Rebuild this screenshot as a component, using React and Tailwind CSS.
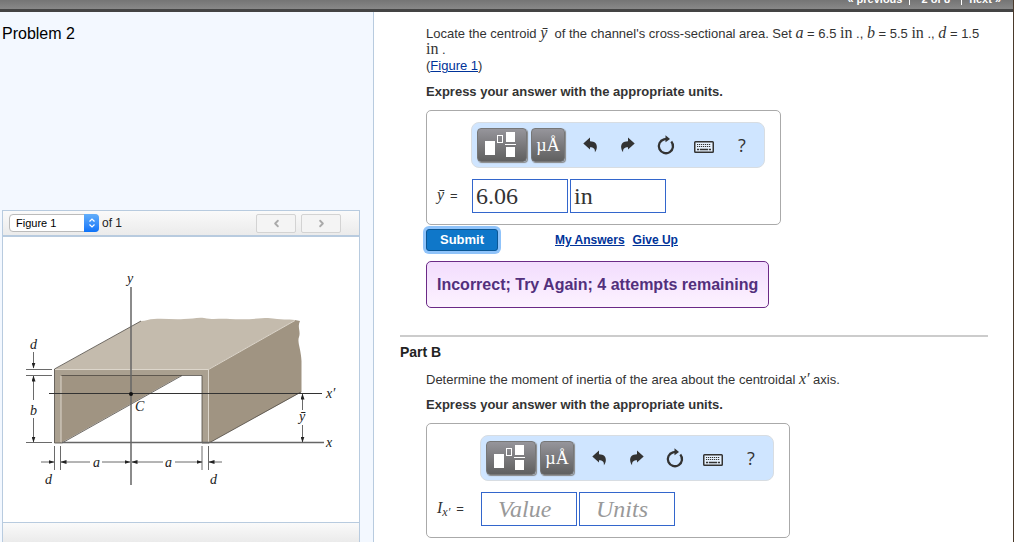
import { useState } from "react";
import { ChevronLeft, ChevronRight } from "lucide-react";

const serif = "font-['Liberation_Serif',serif]";

function MathText({ children, italic }) {
  return <span className={`${serif} text-[16px] leading-[0] ${italic ? "italic" : ""}`}>{children}</span>;
}

function ToolIcon({ name }) {
  if (name === "Undo") {
    return (
      <svg className="h-6 w-6" viewBox="0 0 24 24" fill="#333">
        <path d="M5.3 10.6 12 4.600v3.600c5 .1 7.300 2.600 6.800 6.600-.2 1.800-.9 3.200-1.900 4.400.3-3.600-1.300-5-4.900-5V16.600z" />
      </svg>
    );
  }
  if (name === "Redo") {
    return (
      <svg className="h-6 w-6" viewBox="0 0 24 24" fill="#333">
        <path d="M18.700 10.600 12 4.600v3.600c-5 .1-7.300 2.600-6.800 6.600.2 1.800.9 3.200 1.900 4.400-.3-3.600 1.300-5 4.900-5v2.400z" />
      </svg>
    );
  }
  if (name === "Reset") {
    return (
      <svg className="h-6 w-6" viewBox="0 0 24 24" fill="none">
        <path d="M17.300 8.500A7.100 7.100 0 1 1 10 6.300L13 5.800" stroke="#333" strokeWidth="2.300" />
        <path d="M11.500 2.200 16 6l-4.500 3.300z" fill="#333" />
      </svg>
    );
  }
  return (
    <svg className="h-6 w-6" viewBox="0 0 24 24" fill="none" stroke="#333">
      <rect x="2.750" y="8.750" width="18.500" height="10.500" rx="0.800" strokeWidth="1.500" fill="#e6f1fd" />
      <path d="M5 11.500h14M5 13.500h14" strokeWidth="1.200" strokeDasharray="1.200 0.800" />
      <path d="M5 16.500h2.200M8 16.500h8M16.800 16.500h2.200" strokeWidth="1.400" />
    </svg>
  );
}

function Toolbar() {
  const dark =
    "h-[34px] rounded-[4px] border border-[#777] bg-linear-to-b from-[#96959b] to-[#606060] shadow-[1px_1px_1px_#888]";
  return (
    <div className="flex h-[46px] w-[294px] items-center rounded-[8px] border border-[#d8dde2] bg-[#cfe5ff] pl-[5px]">
      <button type="button" aria-label="Templates" className={`${dark} w-[50px]`}>
        <svg className="h-8 w-12" viewBox="1 1 48 32" fill="#fff">
          <rect x="8" y="13" width="10" height="14" />
          <rect x="20.500" y="7.500" width="5" height="7" fill="none" stroke="#fff" />
          <rect x="29" y="4" width="9" height="10" />
          <rect x="28" y="16" width="11" height="1" />
          <rect x="29" y="19" width="9" height="10" />
        </svg>
      </button>
      <button type="button" className={`${dark} ml-1 mr-1.5 w-[34px] ${serif} text-[18px] leading-none text-white`}>
        µÅ
      </button>
      {["Undo", "Redo", "Reset", "Keyboard"].map((name) => (
        <button key={name} type="button" aria-label={name} className="flex w-[38px] justify-center">
          <ToolIcon name={name} />
        </button>
      ))}
      <button type="button" className="w-[38px] font-['Open_Sans',sans-serif] text-[18px] leading-6 text-[#333]">
        ?
      </button>
    </div>
  );
}

function AnswerBox({ id, label, labelWidth, value, units }) {
  const [answer, setAnswer] = useState(value);
  const [unit, setUnit] = useState(units);
  const input = `${serif} h-[34px] w-24 border border-[#3366cc] bg-white text-[24px] text-[#333] outline-none placeholder:italic placeholder:text-[#999] placeholder-shown:pl-4 not-placeholder-shown:pl-[3px]`;
  return (
    <div className="grid w-fit grid-cols-[auto_auto] items-center gap-y-[11px] rounded-[5px] border border-[#aaa] py-[11px] pl-2.5 pr-[15px]">
      <div className="col-start-2">
        <Toolbar />
      </div>
      <label htmlFor={id} className={`${labelWidth} flex items-baseline gap-1.5 text-[13px] leading-4`}>
        <span>{label}</span>
        <span>=</span>
      </label>
      <div className="flex gap-0.5 pl-px">
        <input id={id} className={input} placeholder="Value" value={answer} onChange={(e) => setAnswer(e.target.value)} />
        <input
          aria-label="Units"
          className={input}
          placeholder="Units"
          value={unit}
          onChange={(e) => setUnit(e.target.value)}
        />
      </div>
    </div>
  );
}

function ChannelFigure() {
  return (
    <svg className="block w-full" viewBox="3 237 356 285" role="img" aria-label="Channel cross-section">
      <defs>
        <marker id="arrow" viewBox="0 0 6 4" markerWidth="6" markerHeight="4" refX="5.500" refY="2" orient="auto-start-reverse" markerUnits="userSpaceOnUse">
          <path d="M0 0 6 2 0 4z" fill="#222" />
        </marker>
      </defs>

      {/* channel body */}
      <path d="M61 375H182L61 443z" fill="#a09482" />
      <path d="M55 369 141 321c5 0 8-2 13-2 10-1 20 1 30 0 8 0 14-2 20-1 10 2 16 0 26 1 20 1 30-1 38-1 14 2 20 1 27 2L208 369z" fill="#c4bbad" />
      <path d="M208 369 295 320l5 1c-3 7 1 10-1 16-2 5 2 12 2.500 24V392L209 443z" fill="#a09482" />
      <path d="M54.500 369H208.500V443H202V375H61V443h-6.500z" fill="#aaa090" />
      <path d="M55 369.500H208.500L295 320.500M208.500 369.500V442M61 376v66" fill="none" stroke="#ddd6cb" />
      <path d="M54.500 443V369L141 321M61.500 375.500H202V443M54.500 443H62L182 375.500M202 443h7L301 392" fill="none" stroke="#4e4942" strokeWidth="0.800" />

      {/* axes */}
      <path d="M131 287v198M62 442.500H324" stroke="#666" strokeWidth="1.500" />
      <path d="M49 393.500H322" stroke="#333" />
      <circle cx="131" cy="394" r="2" fill="#111" />

      {/* dimensions */}
      <g stroke="#444" strokeWidth="0.800" fill="none">
        <path d="M26 369.500h26M26 375.500h26M26 442.500h26M54.500 446v24M60.500 446v24M202 446v24M208.500 446v24" />
        <path d="M33.500 352v16" markerEnd="url(#arrow)" />
        <path d="M33.500 400v-24" markerEnd="url(#arrow)" />
        <path d="M33.500 418v24" markerEnd="url(#arrow)" />
        <path d="M302.500 410v-16" markerEnd="url(#arrow)" />
        <path d="M302.500 425v17" markerEnd="url(#arrow)" />
        <path d="M41 462h13" markerEnd="url(#arrow)" />
        <path d="M90 462H61" markerEnd="url(#arrow)" />
        <path d="M102 462h28" markerEnd="url(#arrow)" />
        <path d="M163 462h-31" markerEnd="url(#arrow)" />
        <path d="M175 462h27" markerEnd="url(#arrow)" />
        <path d="M222 462h-13" markerEnd="url(#arrow)" />
      </g>

      <g className="font-['Liberation_Serif',serif] italic" fontSize="14" fill="#222">
        <text x="127" y="283">y</text>
        <text x="30" y="349">d</text>
        <text x="30" y="415">b</text>
        <text x="135" y="411">C</text>
        <text x="93" y="467">a</text>
        <text x="165" y="467">a</text>
        <text x="45" y="484">d</text>
        <text x="210" y="484">d</text>
        <text x="299" y="421">ȳ</text>
        <text x="326" y="398">x′</text>
        <text x="326" y="447">x</text>
      </g>
    </svg>
  );
}

function FigurePanel() {
  const nav =
    "flex h-[19px] w-10 items-center justify-center rounded-[2px] border border-[#d3d3d3] bg-[#f4f4f4] text-[#aaa]";
  return (
    <section className="ml-0.5 mr-[13px] flex flex-1 flex-col border border-b-0 border-[#b8cbdf]">
      <div className="flex h-[26px] items-center border-b-2 border-[#b8cbdf] bg-linear-to-b from-[#fafafa] to-[#ebebeb] pl-1.5 pr-[18px] text-[12px] text-[#222]">
        <div className="relative">
          <select
            aria-label="Figure"
            className="block h-[18px] w-[90px] appearance-none rounded-[4px] border border-[#bbb] bg-white pl-1.5 text-[11px] leading-4 text-black"
          >
            <option>Figure 1</option>
          </select>
          <span className="pointer-events-none absolute right-0 top-0 flex h-[18px] w-[15px] items-center justify-center rounded-r-[4px] bg-linear-to-b from-[#62aefa] to-[#0a72f8]">
            <svg className="h-3 w-2" viewBox="0 0 8 12" fill="none" stroke="#fff" strokeWidth="1.200">
              <path d="M1.500 4.500 4 2l2.500 2.500M1.500 7.500 4 10l2.500-2.500" />
            </svg>
          </span>
        </div>
        <span className="ml-[3px]">of 1</span>
        <div className="ml-auto flex gap-[5px]">
          <button type="button" aria-label="Previous figure" className={nav}>
            <ChevronLeft size={11} strokeWidth={4} />
          </button>
          <button type="button" aria-label="Next figure" className={nav}>
            <ChevronRight size={11} strokeWidth={4} />
          </button>
        </div>
      </div>
      <div className="bg-white">
        <ChannelFigure />
      </div>
      <div className="flex-1 border-t border-[#b8cbdf] bg-linear-to-b from-[#fafafa] to-[#ebebeb]" />
    </section>
  );
}

export default function App() {
  return (
    <div className="flex h-screen flex-col overflow-hidden border-r border-[#4a3a2c] bg-white font-['Liberation_Sans',Arial,sans-serif] text-[#333]">
      <header className="flex h-3 shrink-0 items-end justify-end overflow-hidden border-b-3 border-[#444] bg-linear-to-b from-[#757575] to-[#888] pb-1 pr-3 text-[11px] font-bold leading-3 text-white">
        <a href="#previous" className="px-[7px]">« previous</a>
        <span className="border-x border-white px-[11px]">2 of 8</span>
        <a href="#next" className="pl-[7px]">next »</a>
      </header>

      <div className="flex min-h-0 flex-1">
        <aside className="flex w-[374px] shrink-0 flex-col border-r border-[#b8cbdf] bg-[#f3f8ff]">
          <h1 className="h-[198px] shrink-0 pl-0.5 pt-3 text-[16px] leading-5 text-black">Problem 2</h1>
          <FigurePanel />
        </aside>

        <main className="min-w-0 flex-1 pl-[26px] pr-[25px] pt-3.5">
          <section className="pl-[26px]">
            <p className="text-[13px] leading-4">
              Locate the centroid <MathText italic>ȳ</MathText>&nbsp; of the channel's cross-sectional area. Set{" "}
              <MathText italic>a</MathText> = 6.5 <MathText>in</MathText> ., <MathText italic>b</MathText> = 5.5{" "}
              <MathText>in</MathText> ., <MathText italic>d</MathText> = 1.5 <MathText>in</MathText> .
              <br />(
              <a href="#figure" className="text-[#003399] underline">Figure 1</a>)
            </p>
            <p className="mb-2.5 mt-2.5 text-[13px] font-bold leading-4">Express your answer with the appropriate units.</p>
            <AnswerBox id="centroid" label={<MathText italic>ȳ</MathText>} labelWidth="w-[34px]" value="6.06" units="in" />

            <div className="mt-1 flex items-center text-[12px] font-bold">
              <button
                type="button"
                className="h-[22px] w-[72px] rounded-[3px] border border-[#0b5694] bg-[#0f77c9] text-[13px] leading-4 text-white shadow-[0_0_0_3px_#8fc3fa]"
              >
                Submit
              </button>
              <a href="#answers" className="ml-[57px] leading-4 text-[#003399] underline">My Answers</a>
              <a href="#giveup" className="ml-2 leading-4 text-[#003399] underline">Give Up</a>
            </div>

            <div className="mt-2.5 flex h-[47px] w-fit items-center rounded-[5px] border border-[#6b2a86] bg-linear-to-b from-[#f2dcfd] to-[#fdf3ff] px-2.5 text-[16px] font-bold text-[#52307c]">
              Incorrect; Try Again; 4 attempts remaining
            </div>
          </section>

          <hr className="mt-[27px] border-t-2 border-[#ccc]" />

          <h2 className="mt-[7px] text-[14px] font-bold leading-4 text-[#222]">Part B</h2>
          <section className="pl-[26px]">
            <p className="mt-3 text-[13px] leading-4">
              Determine the moment of inertia of the area about the centroidal <MathText italic>x′</MathText> axis.
            </p>
            <p className="mb-2.5 mt-[9px] text-[13px] font-bold leading-4">Express your answer with the appropriate units.</p>
            <AnswerBox
              id="inertia"
              label={
                <>
                  <MathText italic>I</MathText>
                  <sub className={`${serif} text-[12px] italic`}>x′</sub>
                </>
              }
              labelWidth="w-[43px]"
              value=""
              units=""
            />
          </section>
        </main>
      </div>
    </div>
  );
}
